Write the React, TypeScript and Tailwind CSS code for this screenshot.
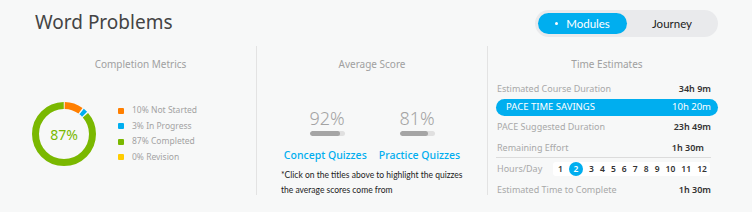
import React from "react";

const legend = [
  { color: "bg-[#ff7f00]", label: "10% Not Started" },
  { color: "bg-[#00aeef]", label: "3% In Progress" },
  { color: "bg-[#7ab800]", label: "87% Completed" },
  { color: "bg-[#ffcc00]", label: "0% Revision" },
];

const Donut = () => {
  const r = 28.5;
  const c = 2 * Math.PI * r;
  const seg = (start: number, len: number) => ({
    strokeDasharray: `${len * c} ${c}`,
    strokeDashoffset: -start * c,
  });
  return (
    <div className="relative w-[64px] h-[64px] shrink-0">
      <svg width="64" height="64" viewBox="0 0 64 64" className="-rotate-90">
        <circle cx="32" cy="32" r={r} fill="none" stroke="#7ab800" strokeWidth="7" style={seg(0.135, 0.862)} />
        <circle cx="32" cy="32" r={r} fill="none" stroke="#ff7f00" strokeWidth="7" style={seg(0.004, 0.094)} />
        <circle cx="32" cy="32" r={r} fill="none" stroke="#00aeef" strokeWidth="7" style={seg(0.106, 0.022)} />
      </svg>
      <div className="absolute inset-0 flex items-center justify-center text-[14px] text-[#7ab800]">87%</div>
    </div>
  );
};

const Score = ({ value, pct }: { value: string; pct: number }) => (
  <div className="flex flex-col items-center w-[36px]">
    <div className="text-[18px] leading-[18px] text-[#a3a3a3] font-light">{value}</div>
    <div className="mt-[4px] w-[35px] h-[5px] rounded-full bg-[#e0e0e0] overflow-hidden">
      <div className="h-full rounded-full bg-[#a5a5a5]" style={{ width: `${pct}%` }} />
    </div>
  </div>
);

const Row = ({ label, value }: { label: string; value: string }) => (
  <div className="flex justify-between items-center h-[19px] pl-[1px] pr-[7px]">
    <span className="text-[#a8a8a8]">{label}</span>
    <span className="text-[#333] font-semibold">{value}</span>
  </div>
);

export default function App() {
  return (
    <div className="w-[752px] h-[219px] bg-white" style={{ fontFamily: "'Noto Sans', 'Open Sans', sans-serif" }}>
      <div className="h-[212px] bg-[#f7f8f8] flex flex-col">
        <div className="flex items-center justify-between h-[46px] shrink-0 pl-[35px] pr-[34px] pt-[1px]">
          <h1 className="text-[19px] leading-[24px] text-[#444] mt-[-4px]">Word Problems</h1>
          <div className="flex items-center h-[27px] w-[183px] rounded-full bg-[#e9eaec] p-[3px]" style={{ fontFamily: "Lato, sans-serif" }}>
            <div className="flex items-center justify-center gap-[8px] w-[89px] h-full rounded-full bg-[#00aeef] text-white text-[11.5px]">
              <span className="w-[3px] h-[3px] rounded-full bg-white" />
              <span>Modules</span>
            </div>
            <div className="flex-1 text-center text-[11.5px] text-[#222] pl-[2px]">Journey</div>
          </div>
        </div>

        <div className="flex h-[149px] shrink-0">
          {/* completion */}
          <div className="w-[257px] border-r border-[#e3e3e3] flex flex-col">
            <div className="text-center text-[10px] leading-[14px] text-[#a0a0a0] mt-[11px] pl-[25px]">Completion Metrics</div>
            <div className="flex items-center mt-[31px] pl-[32px] gap-[22px]">
              <Donut />
              <div className="flex flex-col text-[8.5px] text-[#a3a3a3]">
                {legend.map((l) => (
                  <div key={l.label} className="flex items-center gap-[8px] h-[15.5px]">
                    <span className={`w-[6px] h-[6px] rounded-[1px] ${l.color}`} />
                    <span>{l.label}</span>
                  </div>
                ))}
              </div>
            </div>
          </div>

          {/* average score */}
          <div className="w-[231px] border-r border-[#e3e3e3] flex flex-col">
            <div className="text-center text-[10px] leading-[14px] text-[#a0a0a0] mt-[11px]">Average Score</div>
            <div className="flex justify-center gap-[54px] mt-[38px]">
              <Score value="92%" pct={88} />
              <Score value="81%" pct={80} />
            </div>
            <div className="flex justify-center gap-[12px] mt-[12px] text-[10.5px] leading-[14px] text-[#00aeef] font-medium">
              <span>Concept Quizzes</span>
              <span>Practice Quizzes</span>
            </div>
            <p className="mt-[6px] pl-[24px] text-[8.5px] leading-[15px] text-[#222] whitespace-nowrap" style={{ fontFamily: "Lato, sans-serif" }}>
              *Click on the titles above to highlight the quizzes
              <br />
              the average scores come from
            </p>
          </div>

          {/* time estimates */}
          <div className="flex-1 flex flex-col pl-[8px] pr-[34px] text-[9px]">
            <div className="text-center text-[10px] leading-[14px] text-[#a0a0a0] mt-[11px]">Time Estimates</div>
            <div className="mt-[8px] flex flex-col">
              <Row label="Estimated Course Duration" value="34h 9m" />
              <div className="flex justify-between items-center h-[17px] my-[1px] rounded-full bg-[#00aeef] text-white text-[9.5px] pl-[10px] pr-[7px]">
                <span>PACE TIME SAVINGS</span>
                <span>10h 20m</span>
              </div>
              <Row label="PACE Suggested Duration" value="23h 49m" />
              <div className="mt-[2px] border-b border-[#dcdcdc] mr-[7px]">
                <Row label="Remaining Effort" value="1h 30m" />
              </div>
              <div className="flex items-center h-[22px] pl-[1px]">
                <span className="text-[#a8a8a8] w-[56px]">Hours/Day</span>
                <div className="flex items-center justify-between h-[14px] w-[157px] bg-white rounded-[3px] pl-[5px] pr-[3px] text-[8.5px] text-[#333] font-semibold">
                  {Array.from({ length: 12 }, (_, i) => i + 1).map((n) =>
                    n === 2 ? (
                      <span key={n} className="w-[14px] h-[14px] rounded-full bg-[#00aeef] text-white flex items-center justify-center">
                        {n}
                      </span>
                    ) : (
                      <span key={n}>{n}</span>
                    )
                  )}
                </div>
              </div>
              <Row label="Estimated Time to Complete" value="1h 30m" />
            </div>
          </div>
        </div>
      </div>
    </div>
  );
}
